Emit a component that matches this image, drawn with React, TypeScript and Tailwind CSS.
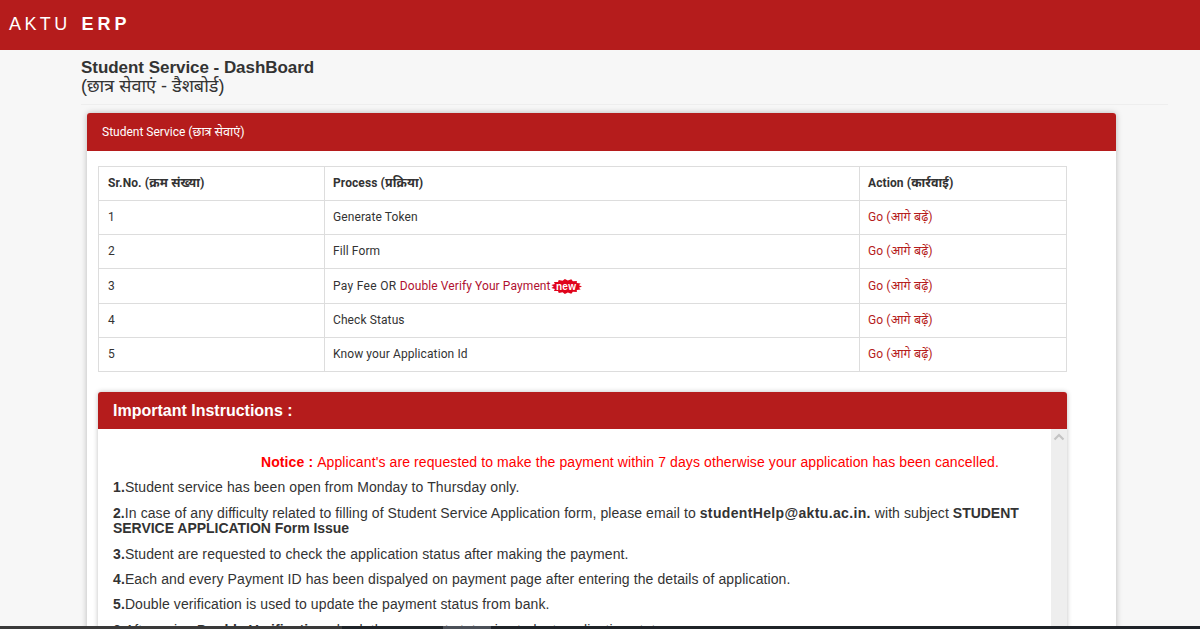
import React from 'react'

const FONT = "font-['Liberation_Sans','Noto_Sans',Arial,sans-serif]"
const HEAD = "font-['Roboto','Noto_Sans',sans-serif]"

const rows = [
  { no: 1, name: 'Generate Token', h: 'h-[34px]', cell: 'pb-[2px]' },
  { no: 2, name: 'Fill Form', h: 'h-[34px]', cell: 'pb-[2px]' },
  { no: 3, name: '', h: 'h-[35px]', cell: '' },
  { no: 4, name: 'Check Status', h: 'h-[34px]', cell: 'pb-[2px]' },
  { no: 5, name: 'Know your Application Id', h: 'h-[34px]', cell: 'pb-[2px]' },
]

function NewBadge() {
  const pts: string[] = []
  const n = 30
  for (let i = 0; i < n; i++) {
    const a = (i / n) * Math.PI * 2
    const r = i % 2 === 0 ? 1 : 0.82
    pts.push(`${15.5 + Math.cos(a) * 15.5 * r},${7.5 + Math.sin(a) * 7.5 * r}`)
  }
  return (
    <span className="relative inline-block w-[31px] h-[15px] align-middle">
      <svg width="31" height="15" viewBox="0 0 31 15" className="block">
        <polygon points={pts.join(' ')} fill="#e0041b" />
      </svg>
      <span className="absolute inset-0 flex items-center justify-center text-[10px] leading-none font-bold tracking-[0.3px] text-white font-['Liberation_Sans',sans-serif]">new</span>
    </span>
  )
}

export default function App() {
  return (
    <div className={`relative h-[629px] overflow-hidden bg-[#f7f7f7] text-[#333] flex flex-col ${FONT}`}>
      <header className="h-[50px] shrink-0 bg-[#b51c1c] flex items-center pl-[9px] pb-[2px] text-white text-[18px]">
        <span className="tracking-[3.4px]">AKTU</span>
        <b className="ml-[11px] tracking-[4px]">ERP</b>
      </header>

      <main className="flex-1 min-h-0 pl-[81px] pr-[32px] overflow-hidden">
        <div className="pt-[9px] h-[55px] border-b border-[#eeeeee] leading-[18px]">
          <div className="text-[17px] font-bold tracking-[-0.04px] text-[#333]">Student Service - DashBoard</div>
          <div className="text-[18px] text-[#333]">(छात्र सेवाएं - डैशबोर्ड)</div>
        </div>

        <section className="ml-[6px] mr-[52px] mt-[8px] bg-white rounded-t-[3px] shadow-[0_0_6px_rgba(0,0,0,0.25)] h-[600px]">
          <div className={`h-[38px] bg-[#b51c1c] rounded-t-[3px] flex items-center pl-[15px] text-white text-[12px] ${HEAD}`}>
            <span>Student Service <span className="text-[12.5px]">(छात्र सेवाएं)</span></span>
          </div>

          <div className="px-[11px] pt-[15px]">
            <table className={`w-[969px] border-collapse text-[12px] tracking-[0.1px] text-[#333] table-fixed ${HEAD}`}>
              <thead>
                <tr className="h-[34px] font-bold text-left">
                  <th className="w-[226px] border border-[#dddddd] pl-[9px] font-bold">Sr.No. <span className="text-[12.5px]">(क्रम संख्या)</span></th>
                  <th className="w-[535px] border border-[#dddddd] pl-[8px] font-bold">Process <span className="text-[12.5px]">(प्रक्रिया)</span></th>
                  <th className="border border-[#dddddd] pl-[8px] font-bold">Action <span className="text-[12.5px]">(कार्रवाई)</span></th>
                </tr>
              </thead>
              <tbody>
                {rows.map(r => (
                  <tr key={r.no} className={r.h}>
                    <td className={`border border-[#dddddd] pl-[9px] ${r.cell}`}>{r.no}</td>
                    <td className={`border border-[#dddddd] pl-[8px] ${r.cell}`}>
                      {r.name}
                      {r.no === 3 && (
                        <>
                          <span className="tracking-[0.3px]">Pay Fee OR </span>
                          <span className="text-[#b01030]">Double Verify Your Payment</span>
                          <NewBadge />
                        </>
                      )}
                    </td>
                    <td className="border border-[#dddddd] pl-[8px] text-[#b51c1c]">Go <span className="text-[12.5px]">(आगे बढ़ें)</span></td>
                  </tr>
                ))}
              </tbody>
            </table>

            <div className="mt-[20px] w-[969px] bg-white rounded-t-[3px] shadow-[0_0_5px_rgba(0,0,0,0.25)]">
              <div className="h-[37px] bg-[#b51c1c] rounded-t-[3px] flex items-center pl-[15px] text-white text-[16px] font-bold">
                Important Instructions :
              </div>
              <div className="flex h-[300px]">
                <div className="flex-1 pl-[15px] pr-[30px] text-[14px] leading-[15px] tracking-[0.1px] text-[#333]">
                  <p className="pt-[26px] pl-[148px] text-[#ff0000] whitespace-nowrap">
                    <b>Notice : </b>Applicant's are requested to make the payment within 7 days otherwise your application has been cancelled.
                  </p>
                  <p className="mt-[10px]"><b>1.</b>Student service has been open from Monday to Thursday only.</p>
                  <p className="mt-[11px] tracking-[0.08px]">
                    <b>2.</b>In case of any difficulty related to filling of Student Service Application form, please email to <b className="tracking-[0.35px]">studentHelp@aktu.ac.in.</b> with subject <b className="tracking-[-0.03px]">STUDENT SERVICE APPLICATION Form Issue</b>
                  </p>
                  <p className="mt-[11px]"><b>3.</b>Student are requested to check the application status after making the payment.</p>
                  <p className="mt-[10px]"><b>4.</b>Each and every Payment ID has been dispalyed on payment page after entering the details of application.</p>
                  <p className="mt-[10px]"><b>5.</b>Double verification is used to update the payment status from bank.</p>
                  <p className="mt-[11px]"><b>6.</b>After using <b>Double Verification</b> check the payment status in student application status.</p>
                </div>
                <div className="w-[16px] bg-[#eeeeee] flex justify-center pt-[4px]">
                  <svg width="12" height="8" viewBox="0 0 12 8"><path d="M1.5 6.5 6 2l4.5 4.5" fill="none" stroke="#c4c4c4" strokeWidth="2.2" /></svg>
                </div>
              </div>
            </div>
          </div>
        </section>
      </main>
      <div className="h-[3px] shrink-0 flex bg-[#1f2328]">
        <div className="w-[342px] bg-[#3a3a3a]" />
        <div className="w-[101px]" />
        <div className="w-[48px] bg-[#4b5058]" />
      </div>
    </div>
  )
}
